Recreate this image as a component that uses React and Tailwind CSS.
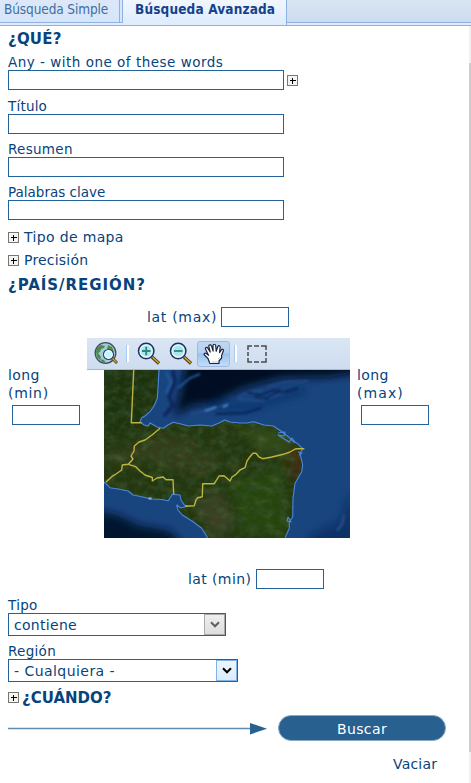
import React from "react";

const VERDANA = "font-['Verdana','DejaVu_Sans',sans-serif]";

function Plus() {
  return (
    <svg width="11" height="11" viewBox="0 0 11 11" className="shrink-0" shapeRendering="crispEdges">
      <rect x="0.5" y="0.5" width="10" height="10" fill="#f4f4f2" stroke="#77776f" />
      <path d="M2.5 5.5h6M5.5 2.5v6" stroke="#000" fill="none" />
    </svg>
  );
}

function Field({ label, spacing, extra }) {
  return (
    <div className="flex h-[43px] flex-col">
      <label className={`h-[17px] text-[13.5px] leading-[18px] whitespace-nowrap ${spacing}`}>{label}</label>
      <div className="flex items-center gap-[3px]">
        <div className="h-5 w-[276px] border border-[#22629a] bg-white" />
        {extra}
      </div>
    </div>
  );
}

function SmallInput() {
  return <div className="h-5 w-[68px] shrink-0 border border-[#22629a] bg-white" />;
}

function Lens({ sign }) {
  return (
    <svg width="24" height="24" viewBox="0 0 24 24">
      <path d="M15 15l7 6.5" stroke="#4d3c25" strokeWidth="3.4" />
      <path d="M15.5 15.2l6.2 5.8" stroke="#d7a632" strokeWidth="1.5" />
      <circle cx="9.2" cy="9" r="7.7" fill="#a9e6ea" stroke="#252b61" strokeWidth="1.5" />
      <circle cx="9.2" cy="9" r="6" fill="none" stroke="#e6fbfc" strokeWidth="1.1" />
      <path d={sign === "+" ? "M5 9h8.5M9.2 4.7v8.5" : "M5 9h8.5"} stroke="#2f8582" strokeWidth="1.8" />
    </svg>
  );
}

function Globe() {
  return (
    <svg width="24" height="24" viewBox="0 0 24 24">
      <circle cx="11.5" cy="11" r="10.3" fill="#a4cbdc" stroke="#454e59" strokeWidth="1.3" />
      <path d="M3 6l4-3 4 1-1 2-3 1-1 3-2 1 3 4-1 3-3-3-1-5zM14 3l4 2 2 5-3-1-4-2zM6 17l4 1 2 3-4-1z" fill="#4c8a4a" />
      <path d="M18 16l5 5" stroke="#4d3c25" strokeWidth="3" />
      <path d="M18.3 16.3l4.2 4.2" stroke="#dba52e" strokeWidth="1.3" />
      <circle cx="14.5" cy="12.5" r="5" fill="#c6f2fa" stroke="#303b70" strokeWidth="1.2" />
      <circle cx="14.5" cy="12.5" r="3.8" fill="none" stroke="#fff" />
    </svg>
  );
}

function Hand() {
  return (
    <svg width="22" height="22" viewBox="0 0 22 22">
      <path
        d="M6.5 19.5L5 15.5 1.4 12C.5 10.6 2 9.7 3.3 10.6L5.6 12.4 2.6 6.2C2 4.5 4 3.8 4.8 5.2L7.2 9 5.8 3.5C5.6 1.7 7.8 1.3 8.5 2.9L10.1 8.2 10 2.6C10.1.8 12.4.8 12.7 2.5L13.2 8.3 14.8 3.7C15.5 2 17.5 2.7 17.2 4.4L16.5 9.6 18.4 6.8C19.4 5.6 20.9 6.6 20.3 8L18.6 12.5V15L16 18V20.5H7z"
        fill="#fff"
        stroke="#20253f"
        strokeWidth="1.2"
        strokeLinejoin="round"
      />
      <path d="M9 19h6M15 16l2-2" stroke="#c4cbd8" />
    </svg>
  );
}

const NORTH =
  "M55 0L54 18 53.3 28.3 50 36 46 41.7 41 46 37.7 47.7 36 51.7 40 55 44.3 56 46 53 48.3 54.3 53 57 59.3 58.3 64 55 69.3 52.3 77 54 84.3 56 96 55 107.7 56 115 53 120.7 50 126 52 136 53 143 53 149.3 51.7 160 55 169.3 56 177 61 184.3 66.7 190 72 193.3 73.3 198.7 78.7 196 83.3 198.7 95 197.7 101.7 191 113.3 190 121 189 128.3 188.7 146.7 185.3 152 185.3 158.3 181 168";
const SOUTH =
  "0 112L6 117.7 14 119 24.3 121 29 125 34.3 126 47.7 129 58 129.5 64.3 130.7 68.3 124.3 76 125 77 130 80.3 135 84 136 77 138 72.7 135 74 140 78.3 145 88 151 97.7 158.3 103.7 168";

function SatelliteMap() {
  return (
    <svg width="246" height="168" viewBox="0 0 246 168" className="block">
      <defs>
        <filter id="soft" x="-30%" y="-30%" width="160%" height="160%">
          <feGaussianBlur stdDeviation="4" />
        </filter>
        <filter id="softer" x="-30%" y="-30%" width="160%" height="160%">
          <feGaussianBlur stdDeviation="1.1" />
        </filter>
        <filter id="terrain" x="0" y="0" width="100%" height="100%">
          <feTurbulence type="fractalNoise" baseFrequency="0.13" numOctaves="3" seed="8" />
          <feColorMatrix values="0 0 0 0 0.03  0 0 0 0 0.08  0 0 0 0 0.03  2.6 0 0 0 -1.05" />
        </filter>
        <filter id="dry" x="0" y="0" width="100%" height="100%">
          <feTurbulence type="fractalNoise" baseFrequency="0.08 0.12" numOctaves="3" seed="21" />
          <feColorMatrix values="0 0 0 0 0.3  0 0 0 0 0.34  0 0 0 0 0.14  0 2.4 0 0 -1.1" />
        </filter>
        <clipPath id="land">
          <path d={`${NORTH}L103.7 168 97.7 158.3 88 151 78.3 145 74 140 72.7 135 77 138 84 136 80.3 135 77 130 76 125 68.3 124.3 64.3 130.7 58 129.5 47.7 129 34.3 126 29 125 24.3 121 14 119 6 117.7 0 112V0z`} />
        </clipPath>
      </defs>
      <rect width="246" height="168" fill="#19457f" />
      <g filter="url(#soft)">
        <path d="M82 -8H254V3L226 7 178 8 140 18 112 32 88 36 70 46 76 24z" fill="#020a24" />
        <path d="M-8 140L16 146 34 155 66 161 80 176H-8z" fill="#05122e" />
        <path d="M246 120L236 150 206 165 202 176H254z" fill="#0f3166" />
        <path d="M105 36L150 37 178 27 202 20" fill="none" stroke="#0f2f66" strokeWidth="5" />
      </g>
      <g filter="url(#softer)" fill="none">
        <path d="M69 0L71 12 65 27 69 35 60 46" stroke="#0a2456" strokeWidth="3" />
        <path d="M62 2L67 12 62 23M74 18L86 8 96 4" stroke="#245ba4" strokeWidth="2" />
        <path d="M86 44L109 39 125 33 M134 27L145 22 159 20M163 17L181 12 204 11M134 29L157 31 181 23" stroke="#244c83" strokeWidth="1.8" />
        <path d="M143 22L157 25 169 20 178 23 194 18M111 44L141 43 157 38M150 27L163 29 176 19" stroke="#0a1f4c" strokeWidth="1.5" />
        <path d="M101 41L112 37M119 37L124 35" stroke="#5792dc" strokeWidth="1.8" />
        <path d="M240 145L238 154 233 161" stroke="#244c83" strokeWidth="3" />
      </g>
      <g clipPath="url(#land)">
        <rect width="246" height="168" fill="#24370f" />
        <g filter="url(#soft)">
          <path d="M0 0H55L46 42 20 60 0 68z" fill="#1a300d" />
          <path d="M0 85L30 76 50 65 72 67 97 70 92 82 118 84 101 104 65 99 40 90 0 95z" fill="#3d3f21" opacity=".6" />
          <path d="M133 56L171 59 196 78 178 84 157 80z" fill="#304a19" />
          <path d="M185 78L203 79 196 112 185 106z" fill="#42290e" />
          <path d="M89 135L116 119 132 155 112 168z" fill="#3a4120" />
          <path d="M125 112L178 96 185 165 139 166z" fill="#264510" />
        </g>
        <rect width="246" height="168" filter="url(#terrain)" opacity=".6" />
        <rect width="246" height="168" filter="url(#dry)" opacity=".18" />
      </g>
      <g fill="none" stroke="#4d87dc" strokeWidth="1.1" strokeLinejoin="round">
        <path d={NORTH} />
        <path d={`M${SOUTH}`} />
        <path d="M174 63L181 62 180 66 174 65 185 72 188 68 191 72M194 82L198 83 195 85M184 147L187 152 183 151z" />
      </g>
      <g fill="none" stroke="#bdb33f" strokeWidth="1.4" strokeLinejoin="round">
        <path d="M29.7 0L28.6 25 27.3 52.7H37.7" />
        <path d="M56 58.3L48 65 41 70 35 72 30.3 76 30 81 27 86 29 89 24.3 94.3 18.3 95 17.7 100 12 104 7.7 106.7 2 112" />
        <path d="M24.3 94.3L31.7 96.7 36 101 41 105 48.3 107.5 48.3 111 53 108 59.3 107 62 109.7H69L69.7 124.3" />
        <path d="M81 136.3L90.3 135.7 92 130 93.7 127.7 98.3 126.7 98.7 113.7H110.3L115 106 120 105.7 126 111 128 107 132 104.3 136 100 141 97.7 143 91 146 86.7 149 83.3H152L155 87 158.7 88.7 168 87 179.3 84.3 186 82 192 78.7H200.3" />
      </g>
      <path d="M44.5 128.5h3" stroke="#75c2ff" strokeWidth="2" />
    </svg>
  );
}

function Separator() {
  return <div className="h-[17px] w-[3px] border-r border-l border-r-white border-l-[#a8cdf5] bg-white" />;
}

function Chevron({ color }) {
  return (
    <svg width="10" height="8" viewBox="0 0 10 8">
      <path d="M1 1.3L5 5.3 9 1.3" fill="none" stroke={color} strokeWidth="2" />
    </svg>
  );
}

export default function App() {
  return (
    <div className={`${VERDANA} flex h-[783px] w-[471px] flex-col overflow-hidden bg-white text-[#07437c]`}>
      <header className="flex h-[26px] shrink-0 flex-col border-b border-[#8db2e3] bg-[#deecfd] font-['Tahoma','DejaVu_Sans_Condensed','DejaVu_Sans',sans-serif] text-[13.5px] whitespace-nowrap">
        <div className="flex h-[25px] bg-[linear-gradient(#dae5f3_0px,#cbdbef_22px,#8db2e3_22px,#8db2e3_23px,#deecfd_23px)]">
          <div className="h-[23px] w-[120px] border-r border-b border-[#8db2e3] bg-[linear-gradient(#dce8f8,#d6e5fa)] pl-1 leading-[18px] tracking-[-0.1px] text-[#416da3]">
            Búsqueda Simple
          </div>
          <div className="h-[23px] w-[3px] border-r border-b border-[#8db2e3] bg-[#d6e5fa]" />
          <div className="h-[25px] w-[164px] border-r border-[#8db2e3] bg-[linear-gradient(#f1f6fe,#deecfd)] pl-3 leading-[18px] font-bold tracking-[0.15px] text-[#15428b]">
            Búsqueda Avanzada
          </div>
        </div>
      </header>

      <div className="flex min-h-0 flex-1">
        <main className="flex w-[469px] flex-col pl-2">
          <h2 className="h-[27px] text-[15px] leading-[26px] font-bold tracking-[0.2px]">¿QUÉ?</h2>
          <Field label="Any - with one of these words" spacing="tracking-[0.5px]" extra={<Plus />} />
          <div className="h-[1px]" />
          <Field label="Título" spacing="tracking-[0.2px]" />
          <Field label="Resumen" spacing="tracking-[0.3px]" />
          <Field label="Palabras clave" spacing="tracking-[0px]" />
          <div className="flex h-[23px] items-center gap-[5px] pb-[1px] text-[14px]">
            <Plus />
            <span className="tracking-[0.35px]">Tipo de mapa</span>
          </div>
          <div className="flex h-6 items-center gap-[5px] pb-[1px] text-[14px]">
            <Plus />
            <span className="tracking-[0.2px]">Precisión</span>
          </div>
          <h2 className="h-[34px] text-[15px] leading-[24px] font-bold tracking-[0.95px]">¿PAÍS/REGIÓN?</h2>

          <div className="flex h-[31px] shrink-0 items-start gap-1 pl-[139px] text-[14px] leading-5">
            <span className="w-[70px] tracking-[0.7px] whitespace-nowrap">lat (max)</span>
            <SmallInput />
          </div>
          <div className="flex h-[231px] shrink-0 text-[14px]">
            <div className="w-[79px] shrink-0 pt-7 leading-[18px]">
              <div className="tracking-[0.4px]">long</div>
              <div className="tracking-[0.7px]">(min)</div>
              <div className="pt-[3px] pl-1">
                <SmallInput />
              </div>
            </div>
            <div className="flex w-[263px] shrink-0 flex-col items-end">
              <div className="flex h-8 w-full items-center border-b border-[#99bbe8] bg-[linear-gradient(#dae6f4,#cddcef)] pl-[7px]">
                <Globe />
                <div className="pl-2">
                  <Separator />
                </div>
                <div className="pl-[8px]">
                  <Lens sign="+" />
                </div>
                <div className="pl-[8px]">
                  <Lens sign="-" />
                </div>
                <div className="ml-[4px] flex h-[26px] w-[33px] items-center justify-center rounded-[3px] border border-[#9ebae1] bg-[linear-gradient(#c0d7f1_0%,#b3cff0_45%,#9ac2ec_50%,#c3ddf8_100%)]">
                  <Hand />
                </div>
                <div className="pl-[4px]">
                  <Separator />
                </div>
                <svg className="ml-[10px]" width="20" height="18" viewBox="0 0 20 18">
                  <path d="M1 5V1H5M7 1H12M14 1H19V5M19 7V11M19 13V17H14M12 17H7M5 17H1V13M1 11V7" fill="none" stroke="#4b4b4b" strokeWidth="1.5" />
                </svg>
              </div>
              <SatelliteMap />
            </div>
            <div className="pt-7 pl-[7px] leading-[18px]">
              <div className="tracking-[0.4px]">long</div>
              <div className="tracking-[1.1px]">(max)</div>
              <div className="pt-[3px] pl-1">
                <SmallInput />
              </div>
            </div>
          </div>
          <div className="flex h-[27px] shrink-0 items-start gap-1 pl-[180px] text-[14px] leading-5">
            <span className="w-[64px] tracking-[0.4px] whitespace-nowrap">lat (min)</span>
            <SmallInput />
          </div>

          <div className="h-[17px] text-[13.5px] leading-[18px] tracking-[0.3px]">Tipo</div>
          <div className="flex h-[23px] w-[218px] shrink-0 items-stretch border border-[#22629a]">
            <span className="flex-1 pl-[5px] text-[14px] leading-[23px] tracking-[0.3px]">contiene</span>
            <div className="flex w-[21px] items-center justify-center border border-[#aaa] bg-[linear-gradient(#eee,#dedede)]">
              <Chevron color="#606060" />
            </div>
          </div>
          <div className="mt-[6px] h-[17px] text-[13.5px] leading-[18px] tracking-[0.3px]">Región</div>
          <div className="flex h-[23px] w-[230px] shrink-0 items-stretch border border-[#22629a]">
            <span className="flex-1 pl-[5px] text-[14px] leading-[22px] tracking-[0.45px]">- Cualquiera -</span>
            <div className="flex w-[21px] items-center justify-center border border-[#7eb4ea] bg-[linear-gradient(#edf5fd,#dcecfc)]">
              <Chevron color="#000000" />
            </div>
          </div>
          <h2 className="flex h-[33px] items-start gap-[3px] text-[15px] leading-[32px] font-bold">
            <span className="pt-[10px]">
              <Plus />
            </span>
            ¿CUÁNDO?
          </h2>
          <div className="flex h-[26px] shrink-0 items-center gap-[11px]">
            <svg width="259" height="12" viewBox="0 0 259 12" className="mt-[2px]">
              <path d="M0 5.5H244" stroke="#5e8cb1" strokeWidth="1.3" />
              <path d="M242 0L259 5.7 242 11.4z" fill="#286090" />
            </svg>
            <div className="h-[26px] w-[168px] rounded-full border border-[#8aaac4] bg-[#286090] text-center text-[14px] leading-[27px] tracking-[0.4px] text-white">
              Buscar
            </div>
          </div>
          <div className="pt-[14px] pl-[385px] text-[14px] leading-[18px] tracking-[0.2px]">Vaciar</div>
        </main>
        <aside className="w-[2px] bg-[#f0f0f0] pt-[37px]">
          <div className="h-[689px] bg-[#cdcdcd]" />
        </aside>
      </div>
    </div>
  );
}
